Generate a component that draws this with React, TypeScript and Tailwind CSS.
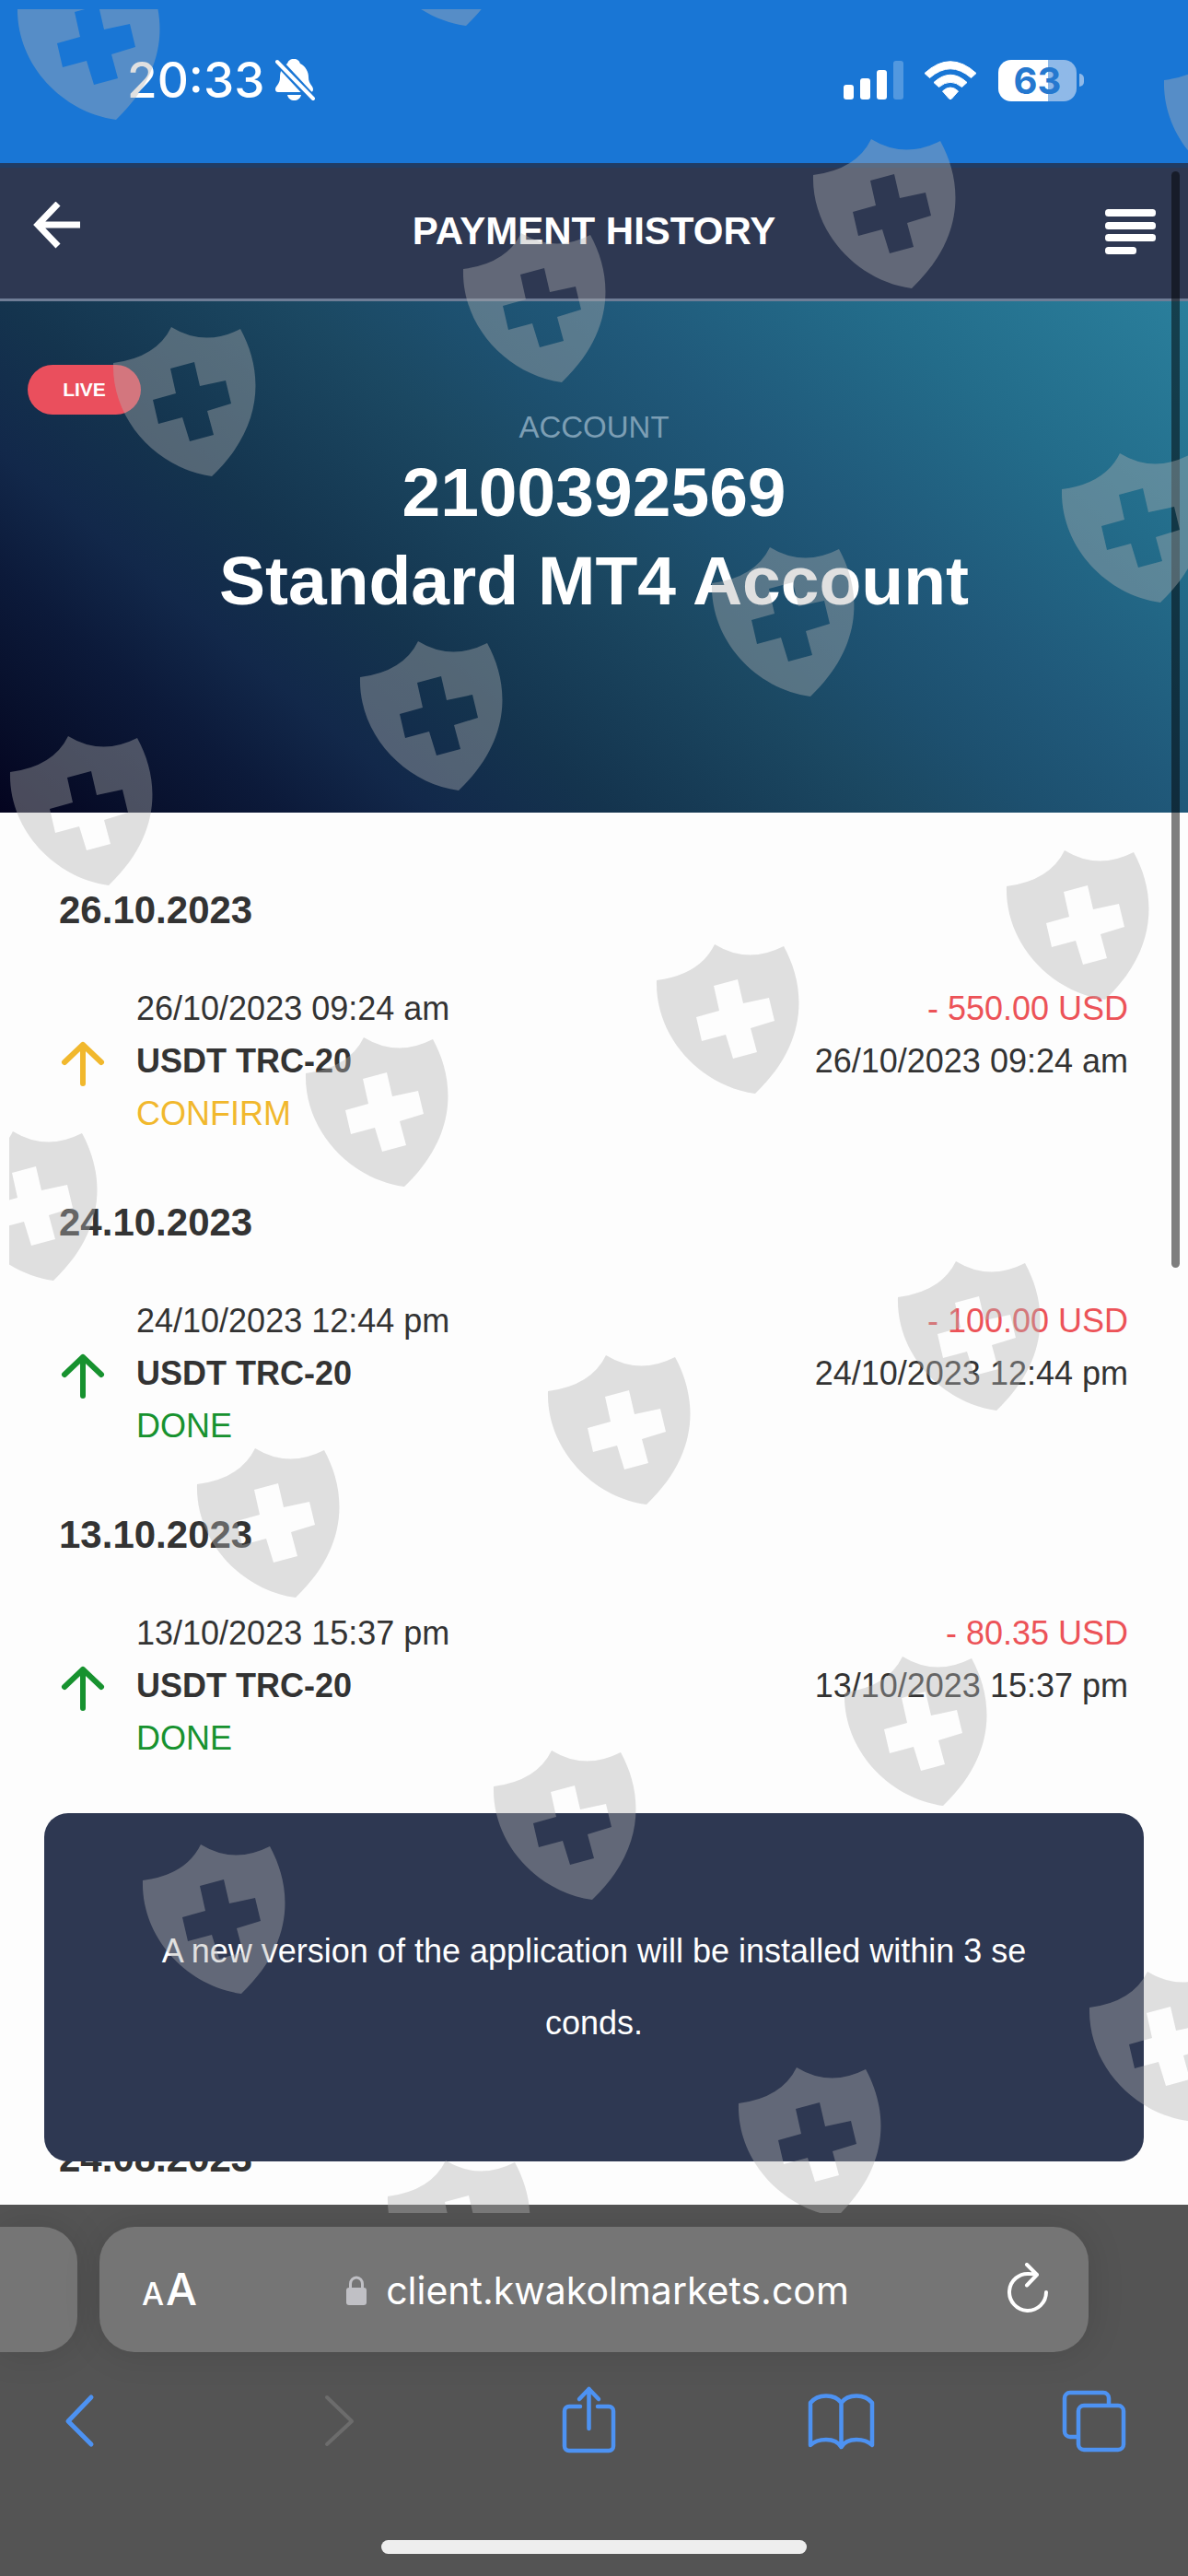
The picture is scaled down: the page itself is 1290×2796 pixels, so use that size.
import { clsx } from "clsx";

interface Payment {
    day: string;
    time: string;
    method: string;
    status: "CONFIRM" | "DONE";
    amount: string;
}

const payments: Payment[] = [
    { day: "26.10.2023", time: "26/10/2023 09:24 am", method: "USDT TRC-20", status: "CONFIRM", amount: "- 550.00 USD" },
    { day: "24.10.2023", time: "24/10/2023 12:44 pm", method: "USDT TRC-20", status: "DONE", amount: "- 100.00 USD" },
    { day: "13.10.2023", time: "13/10/2023 15:37 pm", method: "USDT TRC-20", status: "DONE", amount: "- 80.35 USD" },
];

// Left shoulder of every shield in the overlay
const shields = [
    [399, -95], [19, 7],
    [1264, 87], [883, 190], [503, 292], [123, 394],
    [1153, 531], [773, 633], [391, 735], [11, 838],
    [1093, 962], [713, 1064], [332, 1165], [-49, 1267],
    [975, 1408], [595, 1510], [214, 1611],
    [917, 1837], [536, 1939], [155, 2041],
    [1183, 2179], [802, 2283], [421, 2384],
];

function ShieldOverlay() {
    return (
        <div className="pointer-events-none absolute top-[10px] right-0 bottom-[394px] left-[10px] z-30" aria-hidden="true">
            <svg className="h-full w-full" fill="#b2b2b2" fillOpacity="0.4">
                <g transform="translate(-10 -10)">
                    {shields.map(([x, y]) => (
                        <path
                            key={`${x},${y}`}
                            transform={`translate(${x} ${y})`}
                            fillRule="evenodd"
                            d="M0 0Q47 -6 63 -39Q99 -17 138 -37C162 7 166 67 107 123C48 115 -2 62 0 0ZM62 6L88 -1L94 25L122 19L128 44L102 52L109 78L83 85L75 59L49 66L43 40L68 33Z"
                        />
                    ))}
                </g>
            </svg>
        </div>
    );
}

function StatusBar() {
    return (
        <div className="flex h-[177px] items-center justify-between bg-[#1976d5] pr-[113px] pb-[3px] pl-[138px] text-white">
            <div className="flex items-center gap-3 font-[Inter,sans-serif]">
                <span className="text-[53px] leading-[56px] font-medium">20:33</span>
                <svg width="43" height="46" viewBox="0 0 43 46" fill="#fff">
                    <path d="M20 0c-4 0-6 2-7 5C7 8 5 14 5 20c0 8-5 9-5 13 0 2 1 3 3 3h35c2 0 3-1 3-3 0-4-5-6-5-13 0-6-3-12-9-15-1-3-3-5-7-5ZM13 39h15c-1 4-4 6-7.500 6S14 43 13 39Z" />
                    <path d="M0 0L43 46" stroke="#1976d5" strokeWidth="9" />
                    <path d="M2 3L41 43" stroke="#fff" strokeWidth="4" strokeLinecap="round" />
                </svg>
            </div>
            <div className="flex items-center">
                <svg width="65" height="42" viewBox="0 0 65 42" fill="#fff">
                    <rect x="0" y="26" width="11" height="16" rx="3" />
                    <rect x="18" y="19" width="11" height="23" rx="3" />
                    <rect x="36" y="10" width="11" height="32" rx="3" />
                    <rect x="54" y="0" width="11" height="42" rx="3" fillOpacity="0.25" />
                </svg>
                <svg className="ml-[22px]" width="58" height="43" viewBox="0 0 58 43" fill="#fff" stroke="#fff" strokeLinejoin="round">
                    <path d="M1 13.500Q29-12 57 13.500L51.500 18.500Q29-1 6.500 18.500Z" />
                    <path d="M11 23.500Q29 7 47 23.500L41.500 28.500Q29 18 16.500 28.500Z" />
                    <path d="M20.500 33Q29 25 37.500 33L30.500 41Q29 42.500 27.500 41Z" />
                </svg>
                <div className="ml-[23px] flex h-[45px] w-[85px] items-center justify-center rounded-[14px] bg-linear-to-r from-white from-63% to-[#8fb9e8] to-63%">
                    <span className="font-[Inter,sans-serif] text-[40px] leading-[45px] font-bold text-[#2578cf]">63</span>
                </div>
                <div className="ml-[3px] h-[14px] w-[5px] rounded-r-full bg-[#8fb9e8]" />
            </div>
        </div>
    );
}

function Header() {
    return (
        <header className="grid h-[150px] grid-cols-[1fr_auto_1fr] items-center border-t-[5px] border-b-[3px] border-t-[#213c63] border-b-[#6f7d96] bg-[#2e3852] px-[35px] text-white">
            <button aria-label="Back" className="justify-self-start">
                <svg width="54" height="68" viewBox="0 0 54 68" fill="none" stroke="#fff" strokeWidth="7">
                    <path d="M52 25H6M28 2L6 25L28 48" />
                </svg>
            </button>
            <h1 className="pb-1 text-[42px] leading-[56px] font-bold">PAYMENT HISTORY</h1>
            <button aria-label="Menu" className="justify-self-end">
                <svg width="55" height="52" viewBox="0 0 55 52" fill="#fff">
                    <rect y="0" width="55" height="8" rx="3.500" />
                    <rect y="14" width="55" height="8" rx="3.500" />
                    <rect y="27" width="55" height="8" rx="3.500" />
                    <rect y="41" width="34" height="8" rx="3.500" />
                </svg>
            </button>
        </header>
    );
}

function AccountHero() {
    return (
        <section className="relative h-[555px] bg-[linear-gradient(40deg,#04041f_0%,#08102c_8%,#0c1a3a_16%,#12284a_24%,#14344e_34%,#1b4862_50%,#1d506f_58%,#20597a_67%,#236c8a_82%,#2a7f9c_100%)] pt-[115px] text-center">
            <span className="absolute top-[69px] left-[30px] flex h-[54px] w-[123px] items-center justify-center rounded-full bg-[#ea4f5d] text-[21px] font-bold text-white">
                LIVE
            </span>
            <p className="text-[33px] leading-[44px] text-[#7c9eb4]">ACCOUNT</p>
            <h2 className="text-[75px] leading-[96px] font-bold text-white">
                2100392569
                <br />
                Standard MT4 Account
            </h2>
        </section>
    );
}

function PaymentGroup({ payment }: { payment: Payment }) {
    const tone = payment.status === "DONE" ? "text-[#17922f]" : "text-[#f1b82d]";

    return (
        <article className="mb-[62px]">
            <h3 className="mb-[50px] text-[42px] leading-[56px] font-bold">{payment.day}</h3>
            <div className="flex items-center pr-px text-[36px] leading-[57px]">
                <svg className={clsx("mr-8", tone)} width="52" height="60" viewBox="0 0 52 60" fill="none" stroke="currentColor" strokeWidth="6" strokeLinecap="round" strokeLinejoin="round">
                    <path d="M26 54V12M6 31L26 12L46 31" />
                </svg>
                <div className="flex-1">
                    <p>{payment.time}</p>
                    <p className="font-bold">{payment.method}</p>
                    <p className={tone}>{payment.status}</p>
                </div>
                <div className="self-start text-right">
                    <p className="text-[#ec5358]">{payment.amount}</p>
                    <p>{payment.time}</p>
                </div>
            </div>
        </article>
    );
}

function BrowserBar() {
    return (
        <footer className="bg-[#545454] pt-6 pb-6 font-[Inter,sans-serif]">
            <div className="flex h-[136px] gap-6 pr-[108px]">
                <div className="w-[84px] rounded-r-[38px] bg-[#757575] shadow-[0_0_40px_rgba(0,0,0,0.12)]" />
                <div className="grid flex-1 grid-cols-[1fr_auto_1fr] items-center rounded-[38px] bg-[#757575] pr-[44px] pl-[46px] text-white shadow-[0_0_40px_rgba(0,0,0,0.12)]">
                    <button aria-label="Page settings" className="flex items-baseline gap-[2px] justify-self-start pt-1 leading-[56px] font-medium">
                        <span className="text-[34px]">A</span>
                        <span className="text-[48px]">A</span>
                    </button>
                    <a href="#address" className="flex items-center gap-[21px] pt-[2px] pl-[6px] text-[41px] leading-[56px]">
                        <svg width="22" height="33" viewBox="0 0 22 33">
                            <path d="M4.500 15V9a6.500 7 0 0 1 13 0v6" fill="none" stroke="#c0c0c5" strokeWidth="3" />
                            <rect y="13" width="22" height="19" rx="3" fill="#c0c0c5" />
                        </svg>
                        client.kwakolmarkets.com
                    </a>
                    <button aria-label="Reload" className="justify-self-end">
                        <svg width="44" height="58" viewBox="0 0 44 58" fill="none" stroke="#fff" strokeWidth="4" strokeLinecap="round" strokeLinejoin="round">
                            <path d="M42 32A20 20 0 1 1 24 12Q28 12 32 13M21 2L32 13L21 24.500" />
                        </svg>
                    </button>
                </div>
            </div>
            <nav className="flex justify-between pt-[35px] pr-[62px] pl-[46px] text-[#4d92f2]">
                <button aria-label="Previous page">
                    <svg width="80" height="80" viewBox="0 0 80 80" fill="none" stroke="currentColor" strokeWidth="5" strokeLinecap="round" strokeLinejoin="round">
                        <path d="M53 14L28 40L53 65" />
                    </svg>
                </button>
                <button aria-label="Next page" disabled>
                    <svg width="80" height="80" viewBox="0 0 80 80" fill="none" stroke="#6c6c6c" strokeWidth="4" strokeLinecap="round" strokeLinejoin="round">
                        <path d="M33 14L60 40L33 65" />
                    </svg>
                </button>
                <button aria-label="Share">
                    <svg width="80" height="80" viewBox="-14 -2 80 80" fill="none" stroke="currentColor" strokeWidth="4.500" strokeLinecap="round" strokeLinejoin="round">
                        <path d="M19 22H7a5 5 0 0 0-5 5v38a5 5 0 0 0 5 5h43a5 5 0 0 0 5-5V27a5 5 0 0 0-5-5H38M28.500 46V3M18 14L28.500 3L39 14" />
                    </svg>
                </button>
                <button aria-label="Bookmarks">
                    <svg width="80" height="80" viewBox="-5 -10 80 80" fill="none" stroke="currentColor" strokeWidth="4.500" strokeLinejoin="round">
                        <path d="M35.500 10C32 5 26 2.500 19 2.500S6 5 2 10V56C6 52 12 50 19 50s13 2 16.500 8c3.500-6 9.500-8 16.500-8s13 2 17 6V10C65 5 59 2.500 52 2.500S39 5 35.500 10V57" />
                    </svg>
                </button>
                <button aria-label="Tabs">
                    <svg width="80" height="80" viewBox="-6 -7 80 80" fill="none" stroke="currentColor" strokeWidth="4.500">
                        <path d="M50 16V8a6 6 0 0 0-6-6H8a6 6 0 0 0-6 6v36a6 6 0 0 0 6 6h9" />
                        <rect x="17" y="16" width="49" height="48" rx="6" />
                    </svg>
                </button>
            </nav>
            <div className="mx-auto mt-[89px] h-[15px] w-[462px] rounded-full bg-[#eeeeee]" />
        </footer>
    );
}

export default function App() {
    return (
        <div className="relative flex min-h-screen flex-col overflow-hidden bg-white font-['Liberation_Sans',Arial,sans-serif] text-[#333333]">
            <StatusBar />
            <Header />
            <AccountHero />

            <main className="relative flex-1 bg-[#fdfdfd] px-16 pt-[78px] pb-[21px]">
                {payments.map((payment) => (
                    <PaymentGroup key={payment.day} payment={payment} />
                ))}
                <h3 className="mt-[400px] text-[42px] leading-[56px] font-bold">24.08.2023</h3>

                {/* Update notice, floats over the end of the list */}
                <div role="alert" className="absolute inset-x-12 bottom-[47px] rounded-[26px] bg-[#2e3852] px-[124px] py-[111px] text-center text-[36px] leading-[78px] break-all text-white">
                    A new version of the application will be installed within 3 seconds.
                </div>
            </main>

            <BrowserBar />

            {/* Scroll indicator */}
            <div className="absolute top-[186px] right-[9px] z-20 h-[1190px] w-[9px] rounded-full bg-black/50" />
            <ShieldOverlay />
        </div>
    );
}
